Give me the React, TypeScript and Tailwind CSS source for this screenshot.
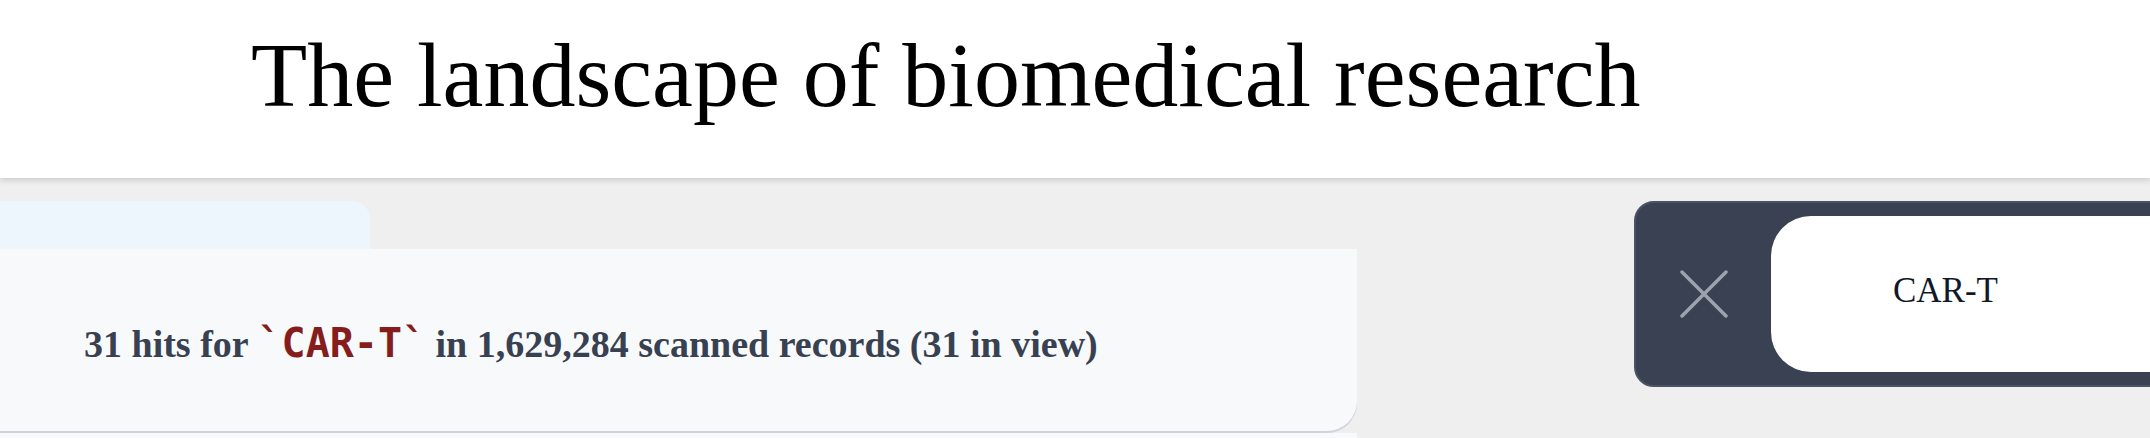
import React from "react";

export default function App() {
  return (
    <div className="w-full h-[438px] overflow-hidden bg-[#efefef] font-['Liberation_Serif',serif]">
      <header className="relative z-10 h-[178px] bg-white shadow-[0_2px_6px_rgba(0,0,0,0.16)] flex items-start">
        <h1 className="pl-[251px] pt-[20px] text-[92px] leading-[110px] text-black font-normal whitespace-nowrap">
          The landscape of biomedical research
        </h1>
      </header>
      <main className="flex items-start pt-[23px]">
        <section className="w-[1357px] shrink-0 flex flex-col">
          <div className="w-[370px] h-[48px] bg-[#eef6fd] rounded-tr-[18px]" />
          <div className="h-[182px] bg-[#f8f9fb] rounded-br-[30px] shadow-[0_2px_0_#d0d1dc] flex items-center pl-[84px] pt-[6px]">
            <p className="text-[38px] font-semibold text-[#374151] whitespace-nowrap">
              31 hits for{" "}
              <code className="font-['DejaVu_Sans_Mono',monospace] font-bold text-[40px] text-[#861d1d]">
                `CAR-T`
              </code>{" "}
              in 1,629,284 scanned records (31 in view)
            </p>
          </div>
          <div className="mt-[2px] h-[40px] bg-[#f8f9fb]" />
        </section>
        <div className="ml-[277px] shrink-0 w-[700px] h-[186px] bg-[#394152] border-2 border-[#4a5366] rounded-[20px] flex items-stretch py-[13px]">
          <button className="w-[135px] flex items-center justify-center">
            <svg width="48" height="48" viewBox="0 0 48 48" fill="none" stroke="#9ca3af" strokeWidth="3.5" strokeLinecap="round">
              <path d="M2 2 L46 46 M46 2 L2 46" />
            </svg>
          </button>
          <div className="flex-1 bg-white rounded-l-[40px] flex items-center pl-[122px] pb-[6px]">
            <span className="text-[35px] text-[#111827]">CAR-T</span>
          </div>
        </div>
      </main>
    </div>
  );
}
